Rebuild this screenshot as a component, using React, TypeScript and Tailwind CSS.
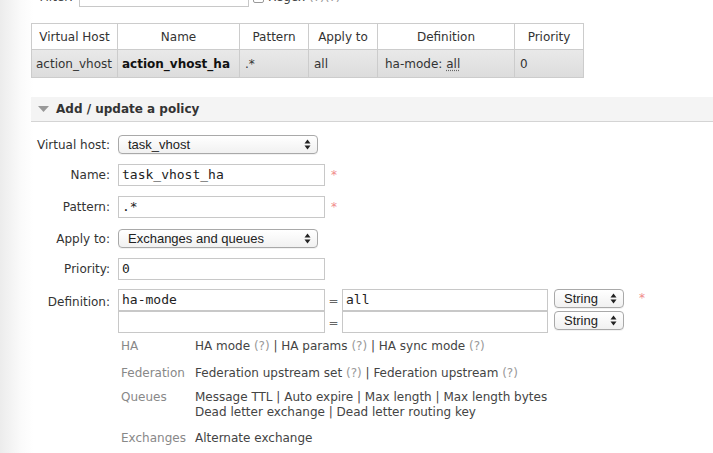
import React from 'react'

function SelectBox({ value, width, height = 19 }: { value: string; width: number; height?: number }) {
  return (
    <div
      className="flex items-center justify-between rounded-[4px] border border-[#a9a9a9] bg-[linear-gradient(#ffffff,#f1f1f1)] pl-[9px] pr-[6px] font-['Liberation_Sans',sans-serif] text-[13px] text-[#222] shadow-[0_1px_0_rgba(0,0,0,0.05)]"
      style={{ width, height }}
    >
      <span className="leading-none">{value}</span>
      <svg width="7" height="11" viewBox="0 0 7 11">
        <path d="M3.5 0.5 L6.5 4.5 L0.5 4.5 Z" fill="#222" />
        <path d="M3.5 10.5 L6.5 6.5 L0.5 6.5 Z" fill="#222" />
      </svg>
    </div>
  )
}

function TextInput({ value, width }: { value: string; width: number }) {
  return (
    <div
      className="flex h-[22px] shrink-0 items-center border border-[#c8c8c8] bg-white pl-[3px] font-['DejaVu_Sans_Mono',monospace] text-[13px] text-[#222]"
      style={{ width }}
    >
      {value}
    </div>
  )
}

function Req() {
  return <span className="ml-[6px] text-[12px] text-[#f08a8a]">*</span>
}

function Row({ label, children, className = '' }: { label: string; children: React.ReactNode; className?: string }) {
  return (
    <div className={`flex items-center ${className}`}>
      <div className="w-[87px] shrink-0 whitespace-nowrap pr-[8px] text-right">{label}</div>
      {children}
    </div>
  )
}

function Q() {
  return <span className="text-[#999]">(?)</span>
}

function HelpRow({ label, className, children }: { label: string; className: string; children: React.ReactNode }) {
  return (
    <div className={`flex ${className}`}>
      <div className="w-[74px] shrink-0 text-[#888]">{label}</div>
      <div>{children}</div>
    </div>
  )
}

const cols = [
  { title: 'Virtual Host', w: 86 },
  { title: 'Name', w: 122 },
  { title: 'Pattern', w: 69 },
  { title: 'Apply to', w: 69 },
  { title: 'Definition', w: 137 },
  { title: 'Priority', w: 69 },
]

export default function App() {
  return (
    <div className="h-[453px] w-[713px] overflow-hidden bg-[linear-gradient(to_right,#ececec,#fbfbfb_22px,#ffffff_34px)] font-['DejaVu_Sans',sans-serif] text-[12px] text-[#444]">
      <div className="pl-[31px]">
        {/* filter row, mostly scrolled off */}
        <div className="-mt-[13px] flex h-[20px] items-center">
          <div className="w-[42px] shrink-0 text-right">Filter:</div>
          <div className="ml-[6px] h-[20px] w-[170px] shrink-0 border border-[#c8c8c8] bg-white" />
          <div className="ml-[4px] h-[11px] w-[11px] shrink-0 rounded-[2px] border border-[#999] bg-white" />
          <span className="ml-[4px]">Regex <Q /><Q /></span>
        </div>

        <table className="mt-[16px] border-collapse text-[#333]">
          <thead>
            <tr className="h-[26px] bg-white">
              {cols.map(c => (
                <th key={c.title} className="border border-[#cccccc] px-[5px] text-center font-normal" style={{ width: c.w }}>
                  {c.title}
                </th>
              ))}
            </tr>
          </thead>
          <tbody>
            <tr className="h-[28px] bg-[linear-gradient(#e9e9e9,#dcdcdc)]">
              <td className="border border-[#cccccc] px-[4px]">action_vhost</td>
              <td className="border border-[#cccccc] px-[4px] font-bold text-[#111]">action_vhost_ha</td>
              <td className="border border-[#cccccc] px-[5px]">.*</td>
              <td className="border border-[#cccccc] px-[5px]">all</td>
              <td className="border border-[#cccccc] px-[7px]">
                ha-mode: <span className="underline decoration-dotted decoration-[#666] underline-offset-2">all</span>
              </td>
              <td className="border border-[#cccccc] px-[5px]">0</td>
            </tr>
          </tbody>
        </table>

        <div className="mt-[19px] flex h-[25px] items-center border-b border-[#d4d4d4] bg-[#f4f4f4] pl-[7px]">
          <svg width="11" height="6" viewBox="0 0 11 6">
            <path d="M0 0 L11 0 L5.5 6 Z" fill="#999" />
          </svg>
          <span className="ml-[7px] text-[12px] font-bold text-[#333]">Add / update a policy</span>
        </div>

        <div className="flex flex-col text-[#333]">
          <Row label="Virtual host:" className="mt-[13px] h-[19px]">
            <SelectBox value="task_vhost" width={200} />
          </Row>
          <Row label="Name:" className="mt-[10px]">
            <TextInput value="task_vhost_ha" width={207} />
            <Req />
          </Row>
          <Row label="Pattern:" className="mt-[10px]">
            <TextInput value=".*" width={207} />
            <Req />
          </Row>
          <Row label="Apply to:" className="mt-[11px] h-[19px]">
            <SelectBox value="Exchanges and queues" width={200} />
          </Row>
          <Row label="Priority:" className="mt-[10px]">
            <TextInput value="0" width={207} />
          </Row>
          <div className="mt-[9px] flex">
            <div className="w-[87px] shrink-0 pr-[8px] pt-[4px] text-right">Definition:</div>
            <div className="flex flex-col">
              <div className="flex items-start">
                <TextInput value="ha-mode" width={207} />
                <span className="w-[17px] pt-[3px] text-center text-[#666]">=</span>
                <TextInput value="all" width={206} />
                <div className="ml-[6px]">
                  <SelectBox value="String" width={70} />
                </div>
                <span className="ml-[15px] text-[12px] text-[#f08a8a]">*</span>
              </div>
              <div className="flex items-start">
                <TextInput value="" width={207} />
                <span className="w-[17px] pt-[3px] text-center text-[#666]">=</span>
                <TextInput value="" width={206} />
                <div className="ml-[6px]">
                  <SelectBox value="String" width={70} />
                </div>
              </div>
            </div>
          </div>

          <div className="ml-[90px] flex flex-col leading-[15px] text-[#444]">
            <HelpRow label="HA" className="mt-[6px]">
              HA mode <Q /> | HA params <Q /> | HA sync mode <Q />
            </HelpRow>
            <HelpRow label="Federation" className="mt-[12px]">
              Federation upstream set <Q /> | Federation upstream <Q />
            </HelpRow>
            <HelpRow label="Queues" className="mt-[9px]">
              Message TTL | Auto expire | Max length | Max length bytes
              <br />
              Dead letter exchange | Dead letter routing key
            </HelpRow>
            <HelpRow label="Exchanges" className="mt-[11px]">
              Alternate exchange
            </HelpRow>
          </div>
        </div>
      </div>
    </div>
  )
}
